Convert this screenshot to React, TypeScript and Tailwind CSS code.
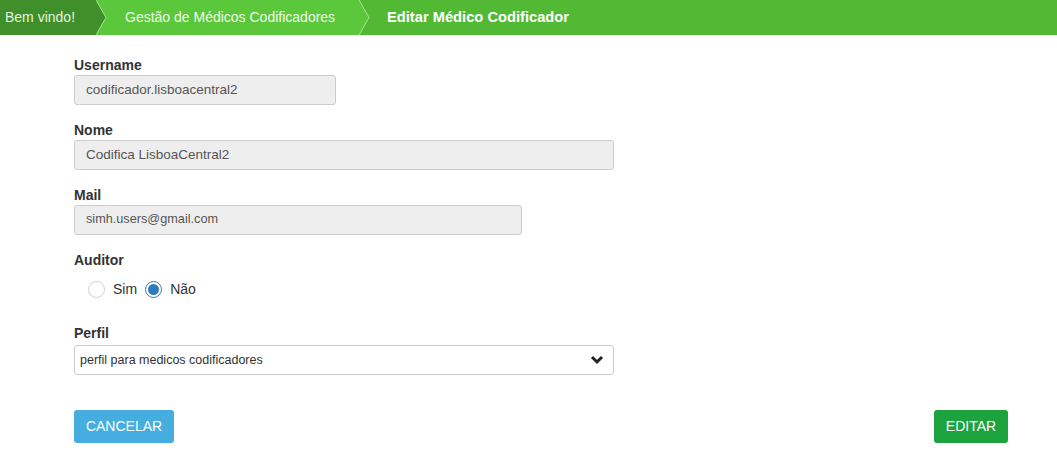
import React from 'react';

function Crumb({
  children,
  bg,
  next,
  className,
}: {
  children: React.ReactNode;
  bg: string;
  next?: string;
  className?: string;
}) {
  return (
    <div className={`relative flex h-full items-center ${bg} ${className ?? ''}`}>
      {children}
      {next && (
        <svg className="absolute -right-[10px] top-0 z-10 h-[35px] w-[11px]" viewBox="0 0 11 35">
          <polygon points="0,0 10,17.5 0,35" className={next} />
          <polyline points="0,0 10,17.5 0,35" fill="none" stroke="#a6e58c" strokeWidth="1" />
        </svg>
      )}
    </div>
  );
}

function Field({ label, value, width, size }: { label: string; value: string; width: string; size: string }) {
  return (
    <div className="mb-[15px]">
      <div className="text-[14px] font-bold leading-[20px] text-[#333]">{label}</div>
      <div
        className={`flex h-[30px] items-center rounded-[3px] border border-[#cccccc] bg-[#eeeeee] px-[11px] text-[#555] ${size} ${width}`}
      >
        {value}
      </div>
    </div>
  );
}

function Radio({ checked, label }: { checked?: boolean; label: string }) {
  return (
    <label className="flex items-center gap-[8px] text-[14px] text-[#333]">
      {checked ? (
        <span className="flex h-[17px] w-[17px] items-center justify-center rounded-full border border-[#2d7cc0] bg-white">
          <span className="h-[11px] w-[11px] rounded-full bg-[#2d7cc0]" />
        </span>
      ) : (
        <span className="h-[17px] w-[17px] rounded-full border border-[#cfcfcf] bg-white" />
      )}
      {label}
    </label>
  );
}

export default function App() {
  return (
    <div className="h-[452px] w-[1057px] bg-white" style={{ fontFamily: '"Liberation Sans", Arial, sans-serif' }}>
      <div className="flex h-[35px] text-[14px]">
        <Crumb bg="bg-[#3f8f2b]" next="fill-[#3f8f2b]" className="w-[97px] pl-[5px] text-[#e6f3df]">
          Bem vindo!
        </Crumb>
        <Crumb bg="bg-[#5bc83b]" next="fill-[#5bc83b]" className="w-[263px] pl-[28px] text-[#eef9e8]">
          Gestão de Médicos Codificadores
        </Crumb>
        <Crumb bg="bg-[#52b935]" className="flex-1 pl-[27px] text-[14.7px] font-bold text-white">
          Editar Médico Codificador
        </Crumb>
      </div>

      <div className="pl-[74px] pr-[49px] pt-[20px]">
        <Field label="Username" value="codificador.lisboacentral2" width="w-[262px]" size="text-[13.5px]" />
        <Field label="Nome" value="Codifica LisboaCentral2" width="w-[540px]" size="text-[13.5px]" />
        <Field label="Mail" value="simh.users@gmail.com" width="w-[448px]" size="text-[12.7px]" />

        <div className="text-[14px] font-bold leading-[20px] text-[#333]">Auditor</div>
        <div className="flex h-[38px] items-center gap-[8px] pl-[14px]">
          <Radio label="Sim" />
          <Radio checked label="Não" />
        </div>

        <div className="mt-[15px] text-[14px] font-bold leading-[20px] text-[#333]">Perfil</div>
        <div className="mt-[2px] flex h-[30px] w-[540px] items-center justify-between rounded-[3px] border border-[#cccccc] bg-white pl-[5px] pr-[9px] text-[12.5px] text-[#333]">
          <span>perfil para medicos codificadores</span>
          <svg className="h-[10px] w-[14px]" viewBox="0 0 14 10">
            <polyline points="2,2 7,7 12,2" fill="none" stroke="#222" strokeWidth="3" />
          </svg>
        </div>

        <div className="mt-[35px] flex justify-between">
          <button className="h-[33px] w-[100px] rounded-[3px] bg-[#45ade0] text-[14px] text-white">CANCELAR</button>
          <button className="h-[33px] w-[74px] rounded-[3px] bg-[#1ca33e] text-[14px] text-white">EDITAR</button>
        </div>
      </div>
    </div>
  );
}
